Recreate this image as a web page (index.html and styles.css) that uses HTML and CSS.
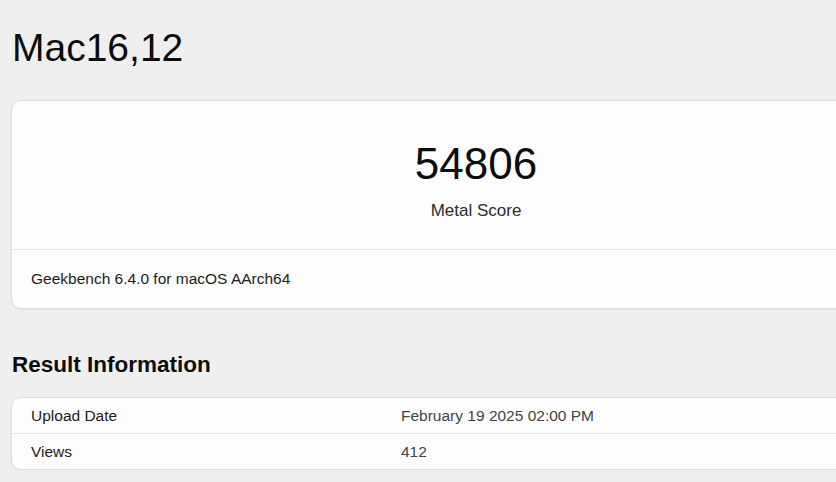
FILE: index.html
```html
<!DOCTYPE html>
<html lang="en">
<head>
<meta charset="utf-8">
<title>Mac16,12 - Geekbench</title>
<link rel="stylesheet" href="styles.css">
</head>
<body>
<main class="page">
  <h1 class="title">Mac16,12</h1>
  <section class="card score-card">
    <div class="score-top">
      <div class="score">54806</div>
      <div class="score-label">Metal Score</div>
    </div>
    <div class="score-bottom">Geekbench 6.4.0 for macOS AArch64</div>
  </section>
  <h2 class="section-title">Result Information</h2>
  <section class="card info-card">
    <div class="info-row">
      <div class="info-name">Upload Date</div>
      <div class="info-value">February 19 2025 02:00 PM</div>
    </div>
    <div class="info-row">
      <div class="info-name">Views</div>
      <div class="info-value">412</div>
    </div>
  </section>
</main>
</body>
</html>
```

FILE: styles.css
```css
html, body {
  margin: 0;
  padding: 0;
  overflow: hidden;
  background: #efefef;
}
body {
  font-family: "Liberation Sans", Arial, sans-serif;
  color: #111;
}
.page {
  padding: 26px 0 0 11px;
  width: 928px;
}
.title {
  margin: 0 0 30px 1px;
  font-size: 39px;
  line-height: 44px;
  font-weight: 400;
  color: #0c0c0c;
}
.card {
  background: #fdfdfd;
  border: 1px solid #e0e0e0;
  border-radius: 10px;
  box-shadow: 0 1px 2px rgba(0, 0, 0, 0.05);
  width: 928px;
}
.score-top {
  display: flex;
  flex-direction: column;
  align-items: center;
  padding: 38px 0 28px;
}
.score {
  font-size: 44px;
  line-height: 50px;
  color: #0d0d0d;
}
.score-label {
  margin-top: 12px;
  font-size: 17px;
  line-height: 20px;
  color: #2c2c2c;
}
.score-bottom {
  border-top: 1px solid #e8e8e8;
  height: 58px;
  display: flex;
  align-items: center;
  padding-left: 19px;
  font-size: 15.5px;
  color: #1c1c1c;
}
.section-title {
  margin: 43px 0 19px 1px;
  font-size: 22.5px;
  line-height: 26px;
  font-weight: 700;
  color: #0c0c0c;
}
.info-row {
  display: grid;
  grid-template-columns: 370px 1fr;
  align-items: center;
  height: 35px;
  padding-left: 19px;
  font-size: 15.5px;
}
.info-row + .info-row {
  border-top: 1px solid #e6e6e6;
}
.info-name {
  color: #1c1c1c;
}
.info-value {
  color: #444;
}
```
